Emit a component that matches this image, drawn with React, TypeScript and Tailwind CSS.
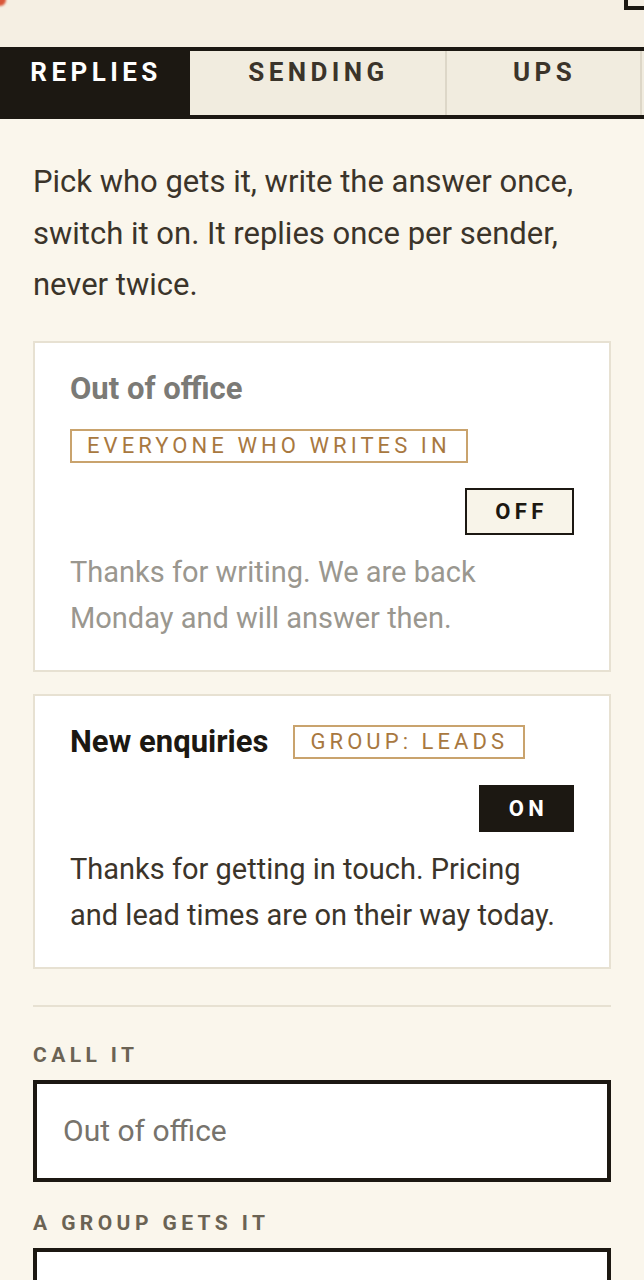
import React from 'react';

const TABS = [
  { id: 'replies', label: 'REPLIES', width: 'w-[190px]' },
  { id: 'sending', label: 'SENDING', width: 'w-[257px]' },
  { id: 'ups', label: 'UPS', width: 'w-[195px]' },
];

interface Rule {
  title: string;
  tag: string;
  on: boolean;
  body: string;
}

const RULES: Rule[] = [
  {
    title: 'Out of office',
    tag: 'Everyone who writes in',
    on: false,
    body: 'Thanks for writing. We are back Monday and will answer then.',
  },
  {
    title: 'New enquiries',
    tag: 'Group: leads',
    on: true,
    body: 'Thanks for getting in touch. Pricing and lead times are on their way today.',
  },
];

const RuleCard: React.FC<{ rule: Rule }> = ({ rule }) => (
  <div className="bg-white border-2 border-[#e7e1d2] px-[35px] pt-[28px] pb-[29px]">
    {/* Title + audience */}
    <div className="flex flex-wrap items-center gap-x-[25px] gap-y-[22px]">
      <h3
        className={`text-[31px] leading-[36px] font-bold ${
          rule.on ? 'text-[#1c1812]' : 'text-[#7b7a76]'
        }`}
      >
        {rule.title}
      </h3>
      <span className="border-2 border-[#c9a36d] px-[15px] text-[22px] leading-[30px] uppercase tracking-[0.185em] text-[#a8783f]">
        {rule.tag}
      </span>
    </div>

    {/* Toggle */}
    <div className="flex justify-end mt-[25px]">
      <button
        className={`h-[47px] border-2 border-[#1c1812] flex items-center justify-center pl-[4px] text-[22px] font-bold tracking-[0.2em] ${
          rule.on ? 'w-[95px] bg-[#1c1812] text-white' : 'w-[109px] bg-[#f8f4e9] text-[#1c1812]'
        }`}
      >
        {rule.on ? 'ON' : 'OFF'}
      </button>
    </div>

    <p
      className={`mt-[14px] text-[29px] leading-[46px] ${
        rule.on ? 'text-[#3b342a]' : 'text-[#9a978f]'
      }`}
    >
      {rule.body}
    </p>
  </div>
);

export default function App() {
  return (
    <div className="min-h-screen bg-[#faf6ec] font-['Roboto',sans-serif] overflow-hidden">
      {/* Header (scrolled past) */}
      <header className="h-[47px] bg-[#f5efe3] flex justify-between items-start overflow-hidden">
        <span className="block w-[12px] h-[12px] -mt-[6px] -ml-[6px] rounded-full bg-[#d9573a] blur-[1px]" />
        <span className="block w-[20px] h-[10px] border-l-4 border-b-4 border-[#1c1812]" />
      </header>

      {/* Tabs */}
      <nav className="flex h-[72px] border-y-4 border-[#1c1812] overflow-hidden">
        {TABS.map((tab, i) => (
          <button
            key={tab.id}
            className={`${tab.width} shrink-0 flex justify-center items-start pt-[7px] pl-[2px] text-[26px] leading-[28px] font-bold tracking-[0.17em] ${
              i === 0
                ? 'bg-[#1c1812] text-white'
                : 'bg-[#f1ecdf] text-[#3b342a] border-r-2 border-[#ddd7c8]'
            }`}
          >
            {tab.label}
          </button>
        ))}
        <div className="flex-1 bg-[#f1ecdf]" />
      </nav>

      <main className="px-[33px] pt-[37px] pb-10">
        <p className="text-[31px] leading-[51.5px] text-[#3b342a]">
          Pick who gets it, write the answer once, switch it on. It replies once per sender, never twice.
        </p>

        <div className="mt-[30px] flex flex-col gap-[22px]">
          {RULES.map((r) => (
            <RuleCard key={r.title} rule={r} />
          ))}
        </div>

        <div className="mt-[36px] h-[2px] bg-[#e7e1d2]" />

        {/* Form */}
        <label className="block mt-[36px] text-[21px] leading-[24px] font-bold uppercase tracking-[0.21em] text-[#6b6354]">
          Call it
        </label>
        <div className="mt-[13px] h-[102px] border-4 border-[#1c1812] bg-white flex items-center px-[26px] text-[30px] text-[#77736c]">
          Out of office
        </div>

        <label className="block mt-[29px] text-[21px] leading-[24px] font-bold uppercase tracking-[0.21em] text-[#6b6354]">
          A group gets it
        </label>
        <div className="mt-[13px] h-[102px] border-4 border-[#1c1812] bg-white" />
      </main>
    </div>
  );
}
